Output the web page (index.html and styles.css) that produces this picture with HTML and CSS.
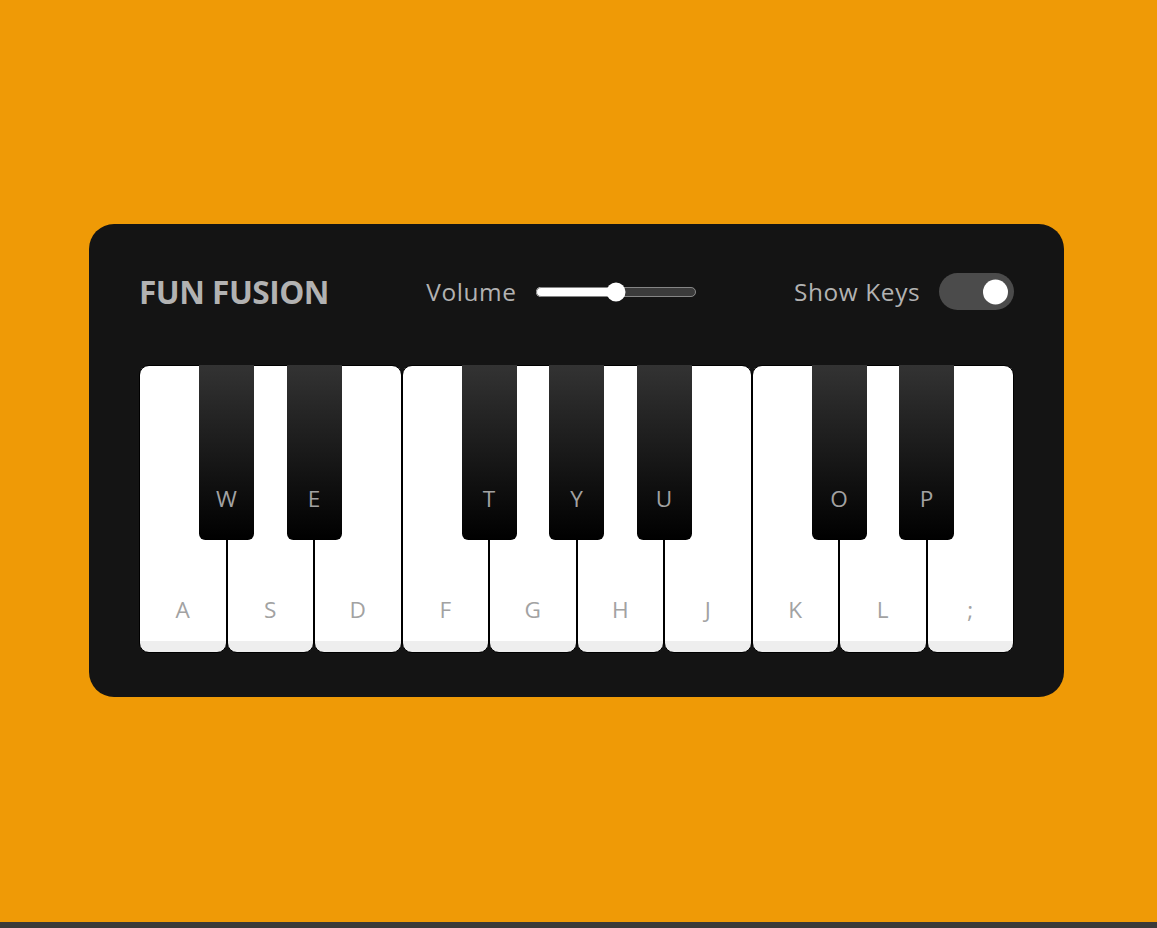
FILE: index.html
```html
<!DOCTYPE html>
<html lang="en">
<head>
<meta charset="utf-8">
<title>Fun Fusion Piano</title>
<link rel="stylesheet" href="styles.css">
</head>
<body>
<div class="page">
  <div class="wrapper">
    <header class="header">
      <h2 class="title">FUN FUSION</h2>
      <div class="column volume-slider">
        <span class="label">Volume</span>
        <input class="range" type="range" min="0" max="1" value="0.5" step="any">
      </div>
      <div class="column keys-checkbox">
        <span class="label">Show Keys</span>
        <input class="toggle" type="checkbox" checked>
      </div>
    </header>
    <ul class="piano-keys">
      <li class="key white"><span class="key-label">a</span></li>
      <li class="key black"><span class="key-label">w</span></li>
      <li class="key white"><span class="key-label">s</span></li>
      <li class="key black"><span class="key-label">e</span></li>
      <li class="key white"><span class="key-label">d</span></li>
      <li class="key white"><span class="key-label">f</span></li>
      <li class="key black"><span class="key-label">t</span></li>
      <li class="key white"><span class="key-label">g</span></li>
      <li class="key black"><span class="key-label">y</span></li>
      <li class="key white"><span class="key-label">h</span></li>
      <li class="key black"><span class="key-label">u</span></li>
      <li class="key white"><span class="key-label">j</span></li>
      <li class="key white"><span class="key-label">k</span></li>
      <li class="key black"><span class="key-label">o</span></li>
      <li class="key white"><span class="key-label">l</span></li>
      <li class="key black"><span class="key-label">p</span></li>
      <li class="key white"><span class="key-label">;</span></li>
    </ul>
  </div>
</div>
</body>
</html>
```
FILE: styles.css
```css
* {
  margin: 0;
  padding: 0;
  box-sizing: border-box;
}

html {
  background: #3a3a3a;
}

body {
  font-family: "Open Sans", "Liberation Sans", sans-serif;
  margin: 0;
}

.page {
  min-height: 922px;
  background: #ef9a06;
  display: flex;
  align-items: center;
  justify-content: center;
  padding: 0 4px 1px 0;
}

.wrapper {
  zoom: 1.25;
  padding: 35px 40px;
  border-radius: 20px;
  background: #141414;
}

.header {
  display: flex;
  align-items: center;
  justify-content: space-between;
  color: #b2b2b2;
}

.title {
  font-size: 1.58rem;
  font-weight: 700;
  line-height: 1.5;
  letter-spacing: -0.4px;
}

.column {
  display: flex;
  align-items: center;
}

.label {
  font-weight: 500;
  margin-right: 15px;
  font-size: 1.22rem;
  letter-spacing: 0.5px;
}

.range {
  accent-color: #fff;
}

.toggle {
  height: 30px;
  width: 60px;
  cursor: pointer;
  appearance: none;
  position: relative;
  background: #4b4b4b;
  border-radius: 30px;
  outline: none;
  border: none;
}

.toggle::before {
  content: "";
  position: absolute;
  top: 50%;
  left: 5px;
  width: 20px;
  height: 20px;
  border-radius: 50%;
  transform: translateY(-50%);
  background: #8c8c8c;
}

.toggle:checked::before {
  left: 35px;
  background: #fff;
}

.piano-keys {
  display: flex;
  list-style: none;
  margin-top: 40px;
}

.key {
  cursor: pointer;
  user-select: none;
  position: relative;
  text-transform: uppercase;
}

.key.white {
  height: 230px;
  width: 70px;
  border-radius: 8px;
  border: 1px solid #000;
  background: linear-gradient(#fff 96%, #eee 4%);
}

.key.black {
  z-index: 2;
  width: 44px;
  height: 140px;
  margin: 0 -22px;
  border-radius: 0 0 5px 5px;
  background: linear-gradient(#333, #000);
}

.key-label {
  position: absolute;
  bottom: 21.5px;
  width: 100%;
  color: #a2a2a2;
  font-size: 1.13rem;
  text-align: center;
}
```
